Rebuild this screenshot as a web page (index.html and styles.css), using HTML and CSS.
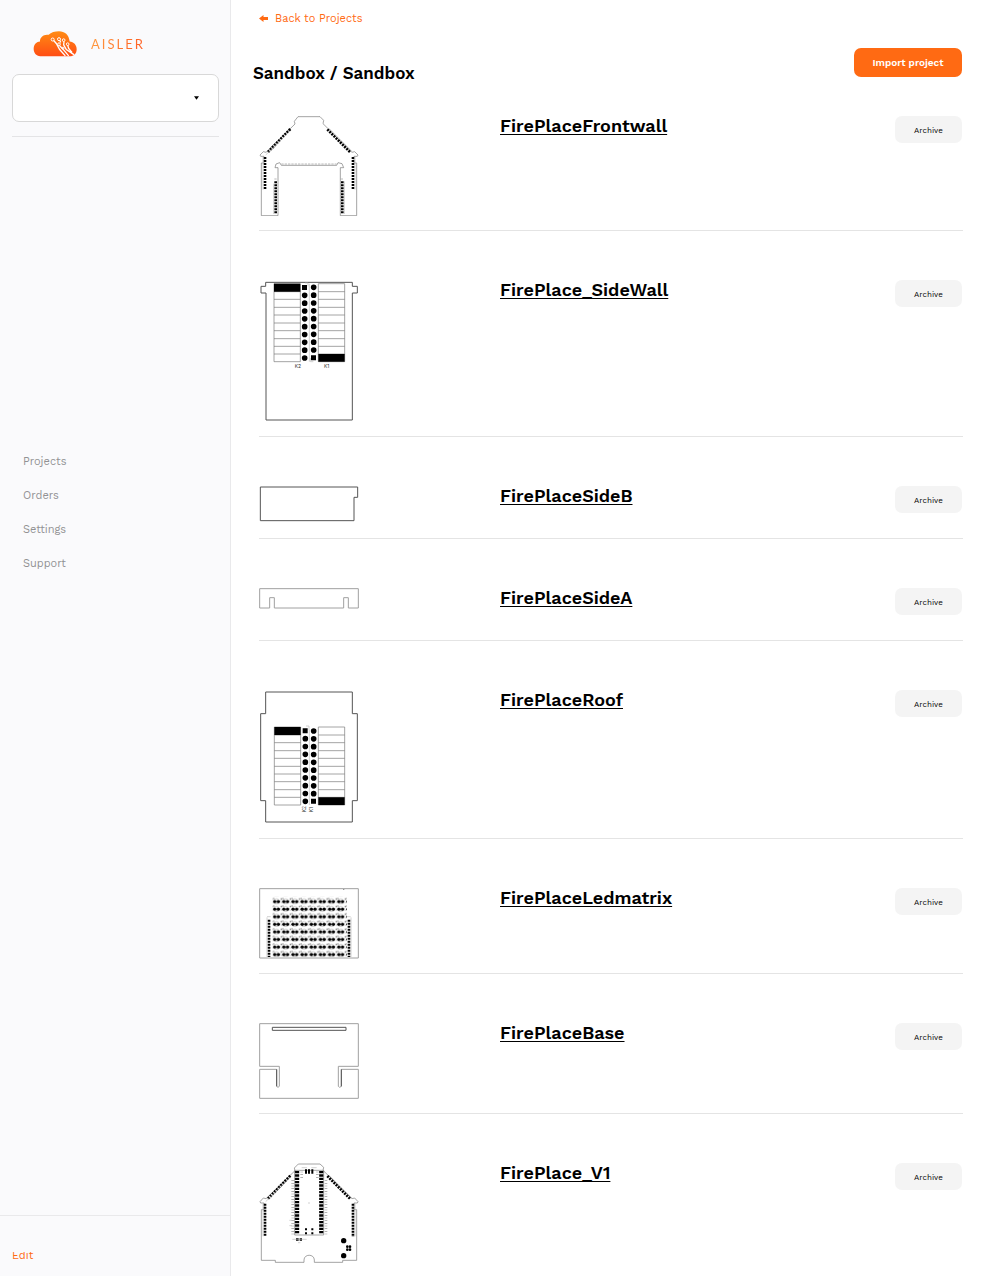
FILE: index.html
```html
<!DOCTYPE html>
<html lang="en">
<head>
<meta charset="utf-8">
<title>Sandbox – AISLER</title>
<link rel="stylesheet" href="styles.css">
</head>
<body>
<aside class="sidebar">
  <div class="sidebar-top">
    <a class="logo" href="#" aria-label="AISLER">
      <svg class="logo-cloud" viewBox="100 90 132 80" aria-hidden="true">
        <defs><linearGradient id="fire" x1="0" y1="0" x2="0" y2="1"><stop offset="0" stop-color="#ff8c14"/><stop offset="1" stop-color="#ff4d14"/></linearGradient></defs>
        <path fill="url(#fire)" d="M122 168C109 168 102 158 102 146C102 133 111 124 121 124C120 110 134 101 147 104C154 96 166 93 178 93C195 93 208 103 210 124C222 125 231 134 231 147C231 160 223 168 210 168Z"/>
        <g fill="none" stroke="#fff" stroke-width="3"><path stroke-width="4" d="M162 121L170 130L180 148L197 167M181 121L183 127M180 137L190 147L207 167M193 124L192 134L200 148L224 164M204 135L207 145L217 157"/><circle cx="159" cy="118" r="4.500"/><circle cx="178" cy="117" r="4.500"/><circle cx="192" cy="120" r="4"/><circle cx="178" cy="132" r="4"/><circle cx="204" cy="132" r="4"/><circle cx="190" cy="144" r="3"/></g>
      </svg>
      <span class="logo-name">AISLER</span>
    </a>
    <div class="account">
      <select class="account-select" aria-label="Account"><option></option></select>
      <svg class="account-arrow" viewBox="0 0 6 4" aria-hidden="true"><path d="M0 0H6L3 4Z"/></svg>
    </div>
  </div>
  <nav class="nav">
    <a href="#">Projects</a>
    <a href="#">Orders</a>
    <a href="#">Settings</a>
    <a href="#">Support</a>
  </nav>
  <div class="sidebar-foot"><a class="edit" href="#">Edit</a></div>
</aside>

<main class="main">
  <a class="back" href="#"><svg class="back-icon" viewBox="0 0 9 7" aria-hidden="true"><path d="M0 3.500L4.500 0V2H9V5H4.500V7Z"/></svg>Back to Projects</a>
  <header class="head">
    <h1 class="title">Sandbox / Sandbox</h1>
    <button class="import" type="button">Import project</button>
  </header>

  <ul class="projects">
    <li class="project">
      <svg class="board" viewBox="27 33 300 300" aria-hidden="true">
        <path class="thin" d="M34 332V174H42V154H32L30 150L40 140L48 142L135 57L133 49L144 35H210L221 46L219 56L306 142L314 140L324 150L322 154H312V174H320V332H271V188H281L276 176L264 173L260 181H94L89 173L78 177L75 188H84V332Z"/>
        <path class="pads faint" d="M94 177H260M73 222H82M272 222H281"/>
        <path class="pads p8" d="M54 141L123 70M232 73L302 143M45 156V254M309 156V254M77 229V327M277 229V327"/>
        <path class="hair" d="M47 150L120 78M237 70L306 139M39 156V254M315 156V254M71 236V327M283 229V327"/>
      </svg>
      <h2 class="name"><a href="#">FirePlaceFrontwall</a></h2>
      <button class="archive" type="button">Archive</button>
    </li>
    <li class="project">
      <svg class="board" viewBox="27 30 300 426" aria-hidden="true">
        <path class="line" d="M47 37H307V49H322V69H307V450H48V69H33V49H47Z"/>
        <path class="grid" d="M72 41H151V275H72ZM205 41H284V275H205ZM72 65H151M72 88H151M72 112H151M72 135H151M72 159H151M72 182H151M72 206H151M72 229H151M72 252H151M205 65H284M205 88H284M205 112H284M205 135H284M205 159H284M205 182H284M205 206H284M205 229H284M205 252H284"/>
        <path d="M72 41H151V65H72ZM205 252H284V275H205ZM156 45H171V60H156ZM183 256H198V271H183Z"/>
        <path class="dots" d="M164 76V266M191 52V243"/>
        <path class="hair" d="M178 41V275M165 39H174V49M181 264V275H190"/>
        <text class="mark" x="134" y="293">K2</text><text class="mark" x="222" y="294">K1</text>
      </svg>
      <h2 class="name"><a href="#">FirePlace_SideWall</a></h2>
      <button class="archive" type="button">Archive</button>
    </li>
    <li class="project">
      <svg class="board" viewBox="27 18 300 114" aria-hidden="true">
        <path class="line" d="M31 21H323V52H312V122H31Z"/>
      </svg>
      <h2 class="name"><a href="#">FirePlaceSideB</a></h2>
      <button class="archive" type="button">Archive</button>
    </li>
    <li class="project">
      <svg class="board" viewBox="27 324 300 114" aria-hidden="true">
        <path class="soft" d="M29 326H325V384H295V353H281V384H73V353H59V384H29Z"/>
      </svg>
      <h2 class="name"><a href="#">FirePlaceSideA</a></h2>
      <button class="archive" type="button">Archive</button>
    </li>
    <li class="project">
      <svg class="board" viewBox="27 24 300 402" aria-hidden="true">
        <path class="line" d="M47 30H307V95H322V356H307V420H47V356H32V95H47Z"/>
        <path class="grid" d="M73 135H152V369H73ZM205 135H284V369H205ZM73 159H152M73 182H152M73 206H152M73 229H152M73 253H152M73 276H152M73 299H152M73 323H152M73 346H152M205 159H284M205 182H284M205 206H284M205 229H284M205 253H284M205 276H284M205 299H284M205 323H284M205 346H284"/>
        <path d="M73 135H152V159H73ZM205 346H284V369H205ZM158 139H173V154H158ZM183 350H198V365H183Z"/>
        <path class="dots" d="M166 170V360M191 147V337"/>
        <path class="hair" d="M178 144V369M168 132H177V144"/>
        <text class="mark" transform="translate(168 391) rotate(-90)">K2</text><text class="mark" transform="translate(189 391) rotate(-90)">K1</text>
      </svg>
      <h2 class="name"><a href="#">FirePlaceRoof</a></h2>
      <button class="archive" type="button">Archive</button>
    </li>
    <li class="project">
      <svg class="board" viewBox="27 24 300 213" aria-hidden="true">
        <defs>
          <pattern id="led" x="68" y="50" width="27.500" height="22.700" patternUnits="userSpaceOnUse">
            <circle cx="6" cy="15" r="5"/><circle cx="17" cy="15" r="5"/>
            <path class="hair" d="M5 9Q12 3 18 9M5 21H18M23 12L26 20"/><path d="M1 4H5V7H1ZM24 5H27V9H24Z" opacity=".6"/>
          </pattern>
        </defs>
        <path class="soft" d="M29 26H325V234H29Z"/>
        <path fill="url(#led)" d="M68 50H291V231H68Z"/>
        <path class="pads p8" d="M57 119V231M297 119V231"/>
        <path class="hair" d="M51 112V231M303 112V231M51 110H62M291 110H302"/>
        <path d="M279 27H283V29H279Z" opacity=".5"/>
      </svg>
      <h2 class="name"><a href="#">FirePlaceLedmatrix</a></h2>
      <button class="archive" type="button">Archive</button>
    </li>
    <li class="project">
      <svg class="board" viewBox="27 24 300 228" aria-hidden="true">
        <path class="soft" d="M29 26H325V154H265V214L269 217L274 214V163H325V250H29V163H80V214L84 217L88 214V154H29Z"/>
        <path class="line" d="M67 37H288V46H67ZM80 163V214M274 163V214"/>
      </svg>
      <h2 class="name"><a href="#">FirePlaceBase</a></h2>
      <button class="archive" type="button">Archive</button>
    </li>
    <li class="project">
      <svg class="board" viewBox="27 24 300 303" aria-hidden="true">
        <path class="thin" d="M34 316V164H42V144H32L30 140L40 129L48 131L135 47L133 39L145 27H210L221 37L219 46L306 131L314 129L324 140L322 144H312V164H320V316H278V322H193V315C193 296 162 296 162 315V322H76V316Z"/>
        <path class="pads p8" d="M54 131L123 60M232 63L302 133M45 146V244M309 146V246"/>
        <path class="pins" d="M141 48V238M214 48V238"/>
        <path class="grid" d="M134 46H221V240H134Z"/>
        <path d="M165 43H171V56H165ZM174 43H180V56H174ZM184 43H190V56H184ZM165 220H171V226H165ZM184 220H190V226H184ZM165 232H171V238H165ZM184 232H190V238H184ZM138 250H146V257H138ZM149 250H156V257H149Z"/>
        <path class="ticks" d="M128 76V238M228 76V238M155 50V74M202 50V74"/>
        <path class="hair" d="M155 38H171M184 38H200M127 253H170M144 263H151M174 144H180M118 196H126M118 212H126M47 140L120 68M237 60L306 129M39 146V244M315 146V244"/>
        <circle cx="281" cy="257" r="8"/><circle cx="281" cy="302" r="8"/><circle cx="292" cy="275" r="4"/><circle cx="300" cy="275" r="4"/><circle cx="292" cy="284" r="4"/><circle cx="300" cy="284" r="4"/>
      </svg>
      <h2 class="name"><a href="#">FirePlace_V1</a></h2>
      <button class="archive" type="button">Archive</button>
    </li>
  </ul>
</main>
</body>
</html>
```
FILE: styles.css
```css
* { box-sizing: border-box; }
body {
  margin: 0;
  min-height: 100vh;
  display: grid;
  grid-template-columns: 231px 1fr;
  background: #fff;
  color: #000;
  font-family: "Work Sans", Inter, sans-serif;
  font-size: 11px;
  line-height: 16px;
}
a { color: inherit; text-decoration: none; }
button { border: 0; font-family: inherit; cursor: pointer; }

.sidebar {
  display: flex;
  flex-direction: column;
  background: #fafafc;
  border-right: 1px solid #e9e9eb;
}
.sidebar-top {
  margin: 0 11px 0 12px;
  padding: 30px 0 14px;
  border-bottom: 1px solid #e4e4e6;
}
.logo { display: flex; align-items: flex-start; gap: 14px; margin-left: 21px; }
.logo-cloud { width: 44px; height: 27px; }
.logo-name {
  font: 13px/28px Lato, sans-serif;
  letter-spacing: 2px;
  background: linear-gradient(100deg, #ff9c40, #ff5a20);
  background-clip: text;
  color: transparent;
}
.account { position: relative; margin-top: 16px; }
.account-select {
  display: block;
  width: 100%;
  height: 48px;
  appearance: none;
  border: 1px solid #d8d8d8;
  border-radius: 7px;
  background: #fff;
}
.account-arrow { position: absolute; right: 20px; top: 22px; width: 5px; height: 4px; pointer-events: none; }

.nav { flex: 1; display: flex; flex-direction: column; padding: 0 23px; color: #929294; }
.nav::before { content: ""; flex: 33; }
.nav::after { content: ""; flex: 67; }
.nav a + a { margin-top: 18px; }
.sidebar-foot { padding: 36px 12px 16px; border-top: 1px solid #e9e9eb; color: #ff6a13; }
.edit { display: block; overflow: hidden; line-height: 8px; }

.main { padding: 11px 24px 12px 22px; }
.back { display: flex; align-items: center; gap: 7px; margin-left: 6px; color: #ff6a13; }
.back-icon { width: 9px; height: 7px; margin-bottom: 2px; fill: currentColor; }
.head { display: flex; justify-content: space-between; padding: 21px 1px 0 0; }
.title { margin: 13px 0 0; font-size: 17px; line-height: 24px; font-weight: 600; }
.import {
  height: 29px;
  width: 108px;
  border-radius: 7px;
  background: #ff6a13;
  color: #fff;
  font-size: 10px;
  font-weight: 600;
}
.projects { list-style: none; margin: 31px 0 0 6px; padding: 0; }
.project {
  display: grid;
  grid-template-columns: 12fr 19fr 4fr;
  align-items: start;
  padding: 0 1px 14px 0;
  margin-bottom: 49px;
  border-bottom: 1px solid #e4e4e4;
}
.project:last-child { margin: 0; padding-bottom: 0; border: 0; }
.name { margin: 0; font-size: 18px; line-height: 20px; font-weight: 600; }
.name a { text-decoration: underline; text-decoration-thickness: 1px; text-underline-offset: 2px; text-decoration-skip-ink: none; }
.archive {
  justify-self: end;
  width: 67px;
  height: 27px;
  padding: 2px 0 0;
  border-radius: 7px;
  background: #f4f4f4;
  color: #000;
  font-size: 8px;
  font-weight: 400;
}

.board { display: block; width: 100px; }
.line, .soft, .thin, .grid, .hair, .pads, .dots, .pins, .ticks { fill: none; }
.line { stroke: #555; stroke-width: 3; }
.soft { stroke: #a0a0a0; stroke-width: 3; }
.thin { stroke: #777; stroke-width: 2; }
.grid { stroke: #777; stroke-width: 2; }
.hair { stroke: #bbb; stroke-width: 2; }
.pads { stroke: #000; stroke-width: 8; stroke-dasharray: 7 3; }
.p8 { stroke-dasharray: 6 3; }
.faint { stroke: #999; stroke-width: 2; }
.dots { stroke: #000; stroke-width: 17; stroke-linecap: round; stroke-dasharray: 0 23.500; }
.pins { stroke: #000; stroke-width: 13; stroke-dasharray: 7 3; }
.ticks { stroke: #999; stroke-width: 8; stroke-dasharray: 2 6; }
.mark { font: 15px Inter, sans-serif; fill: #333; }
```
